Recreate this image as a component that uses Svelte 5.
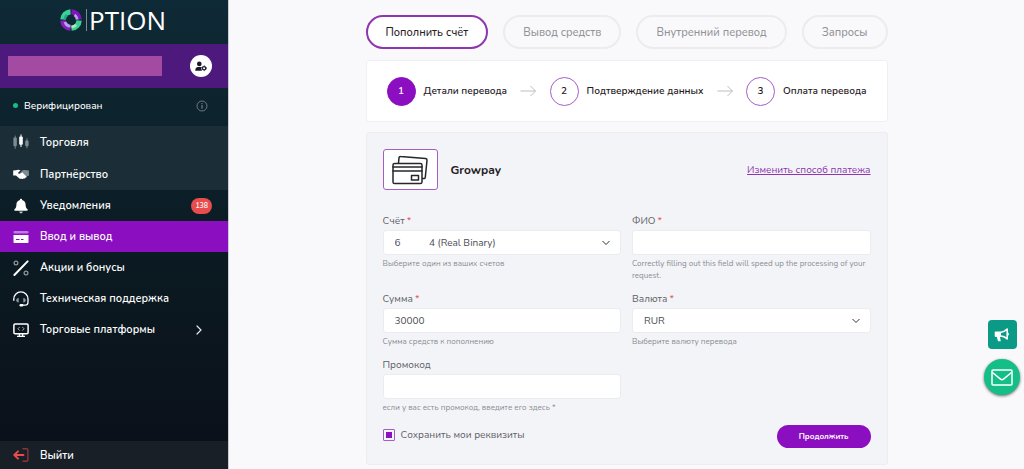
<script>
  const mainNav = [
    { id: 'trade', title: 'Торговля' },
    { id: 'partner', title: 'Партнёрство' }
  ];

  const userNav = [
    { id: 'bell', title: 'Уведомления', badge: 138 },
    { id: 'card', title: 'Ввод и вывод', active: true },
    { id: 'percent', title: 'Акции и бонусы' },
    { id: 'support', title: 'Техническая поддержка' },
    { id: 'platform', title: 'Торговые платформы', arrow: true }
  ];

  const tabs = ['Пополнить счёт', 'Вывод средств', 'Внутренний перевод', 'Запросы'];
  const steps = ['Детали перевода', 'Подтверждение данных', 'Оплата перевода'];
  const account = '6' + '\u00a0'.repeat(11) + '4 (Real Binary)';

  let activeTab = $state(0);
  let fullName = $state('');
  let amount = $state('30000');
  let currency = $state('RUR');
  let promo = $state('');
  let remember = $state(true);
</script>

{#snippet icon(id)}
  <svg class="nav-icon" viewBox="0 0 16 16" aria-hidden="true">
    {#if id === 'trade'}
      <g fill="#7f8c93">
        <rect x="0.4" y="3.6" width="3.4" height="8.6" rx="1" />
        <rect x="1.7" y="1.6" width="0.9" height="13.2" />
        <rect x="12.2" y="6.6" width="3.4" height="5.6" rx="1" />
        <rect x="13.5" y="4.4" width="0.9" height="10" />
      </g>
      <rect x="6.2" y="2.4" width="3.6" height="8.4" rx="1" fill="#fff" />
      <rect x="7.5" y="0.4" width="1" height="12.6" fill="#fff" />
    {:else if id === 'partner'}
      <path d="M9.6 4.2 12 4l3.9.4v5.4l-2.1.5-3.6-3.5-2.2.9-.9-1z" fill="#7f8c93" />
      <path d="M.2 4.6 3 4.2l2-.4 2.6.4-2.3 2.2c-.4.8.6 1.6 1.6 1.2l2.8-1.1 3.8 3.7c.5.9-.4 1.6-1.2 1.2.2.8-.8 1.4-1.5.9-.3.9-1.6 1-2.2.4-1 .3-2-.1-2.8-.8L3 9.6H.2z" fill="#fff" />
    {:else if id === 'bell'}
      <path d="M8 .8c.7 0 1.1.4 1.1 1.1 2.3.6 3.5 2.3 3.5 4.9 0 2.4.7 3.4 1.9 4.5.6.7.2 1.5-.6 1.5H2.1c-.8 0-1.2-.8-.6-1.5 1.2-1.1 1.9-2.1 1.9-4.5 0-2.6 1.2-4.3 3.500-4.900C6.900 1.200 7.300.8 8 .8z" fill="#fff" />
      <path d="M6.200 13.600h3.600c0 2.400-3.600 2.400-3.600 0z" fill="#b7bec2" />
    {:else if id === 'card'}
      <rect x="0.5" y="2" width="15" height="2.6" rx="1" fill="#c07be6" />
      <path d="M.5 6h15v7c0 .6-.4 1-1 1h-13c-.6 0-1-.4-1-1z" fill="#fff" />
      <path d="M3 10.500h3.500M8 10.500h2.500" stroke="#8b0fc0" stroke-width="1" />
    {:else if id === 'percent'}
      <path d="M1.400 15 14.600 1.400" stroke="#fff" stroke-width="2" stroke-linecap="round" />
      <circle cx="3" cy="3" r="1.9" fill="none" stroke="#8d989d" stroke-width="1.2" />
      <circle cx="13" cy="13" r="1.9" fill="none" stroke="#8d989d" stroke-width="1.2" />
    {:else if id === 'support'}
      <path d="M.8 9.300V8A7 7 0 0 1 15 8v3c0 2-1 3.200-3.200 3.200H9" fill="none" stroke="#fff" stroke-width="1.3" stroke-linecap="round" />
      <rect x="6.5" y="13" width="3.8" height="2.4" rx="1.2" fill="#fff" />
      <path d="M5.700 7v4.500c-3.300 0-3.300-4.500 0-4.500zM10.300 7v4.500c3.300 0 3.300-4.500 0-4.500z" fill="#8d989d" />
    {:else if id === 'platform'}
      <rect x="0.9" y="1.9" width="14.2" height="9.8" rx="1.2" fill="none" stroke="#fff" stroke-width="1.5" />
      <path d="M6.400 11.700v2M9.600 11.700v2M4 14.400h8" stroke="#fff" stroke-width="1.4" />
      <path d="m6.700 5-1.800 1.800 1.800 1.800M9.300 5l1.800 1.800-1.800 1.800" fill="none" stroke="#a7b0b4" stroke-width="1" />
    {:else if id === 'exit'}
      <path d="M9.500 1.800h4.200c.7 0 1.200.5 1.200 1.200v10c0 .7-.5 1.200-1.200 1.200H9.500" fill="none" stroke="#8b343a" stroke-width="1.4" />
      <path d="M10.500 8H1.500M5 4.300 1.300 8 5 11.700" fill="none" stroke="#ea4b4b" stroke-width="1.9" stroke-linecap="round" stroke-linejoin="round" />
    {/if}
  </svg>
{/snippet}

{#snippet navItem(item)}
  <a href="#{item.id}" class="nav-item" class:active={item.active}>
    {@render icon(item.id)}
    <span>{item.title}</span>
    {#if item.badge}
      <span class="badge">{item.badge}</span>
    {/if}
    {#if item.arrow}
      <svg class="nav-arrow" viewBox="0 0 8 10" aria-hidden="true">
        <path d="m2 1 4 4-4 4" fill="none" stroke="#e4e8ea" stroke-width="1.2" stroke-linecap="round" />
      </svg>
    {/if}
  </a>
{/snippet}

<div class="layout">
  <aside class="sidebar">
    <a class="logo" href="#home">
      <svg class="logo-ring" viewBox="0 0 22 22" aria-hidden="true">
        <g fill="none" stroke-width="5.4">
          <path d="M10.500 2.900A8.100 8.100 0 0 0 2.900 10.500" stroke="#39d39a" />
          <path d="M2.900 11.500a8.100 8.100 0 0 0 7.600 7.600" stroke="#8a1fc0" />
          <path d="M11.500 19.100a8.100 8.100 0 0 0 7.600-7.600" stroke="#3ccf95" />
          <path d="M19.100 10.500a8.100 8.100 0 0 0-7.600-7.600" stroke="#8314bd" />
        </g>
        <g fill="none" stroke-width="2.8">
          <path d="M5 13a6.300 6.300 0 0 0 5.500 4.200" stroke="#b9a0f2" />
          <path d="M17.200 10.500a6.300 6.300 0 0 0-2.700-4.600" stroke="#b9a0f2" />
          <path d="M11.500 18.200a7.300 7.300 0 0 0 4.500-2.300" stroke="#b6e9b4" />
          <path d="M4.600 10.500a6.500 6.500 0 0 1 2.400-4.500" stroke="#23a983" />
        </g>
      </svg>
      <span class="logo-text">PTION</span>
    </a>

    <div class="profile">
      <span class="profile-name"></span>
      <button type="button" class="profile-btn" aria-label="Профиль">
        <svg viewBox="0 0 14 12" aria-hidden="true">
          <circle cx="5" cy="3" r="2.7" fill="#1b1826" />
          <path d="M.3 11c0-3 1.300-4.400 3.200-4.400h2.800c.6 0 1.100.1 1.500.4-.8 1.400-.6 2.800.6 4z" fill="#1b1826" />
          <circle cx="10.6" cy="8" r="1.9" fill="none" stroke="#1b1826" stroke-width="1.4" />
          <circle cx="10.6" cy="8" r="2.8" fill="none" stroke="#1b1826" stroke-width="0.8" stroke-dasharray="1.4 1.5" />
        </svg>
      </button>
    </div>

    <div class="status">
      <span class="dot"></span>
      <span>Верифицирован</span>
      <svg class="info" viewBox="0 0 12 12" aria-hidden="true">
        <circle cx="6" cy="6" r="5" fill="none" stroke="#72808a" stroke-width="0.9" />
        <path d="M6 5.200v3.400M6 3.200v1" stroke="#8b979f" stroke-width="1" />
      </svg>
    </div>

    <nav>
      <div class="nav-group">
        {#each mainNav as item}
          {@render navItem(item)}
        {/each}
      </div>
      {#each userNav as item}
        {@render navItem(item)}
      {/each}
    </nav>

    <a href="#exit" class="nav-item exit">
      {@render icon('exit')}
      <span>Выйти</span>
    </a>
  </aside>

  <main>
    <div class="content">
      <div class="tabs">
        {#each tabs as tab, index}
          <button type="button" class="tab" class:active={activeTab === index} onclick={() => (activeTab = index)}>{tab}</button>
        {/each}
      </div>

      <div class="steps">
        {#each steps as step, index}
          {#if index > 0}
            <svg class="step-arrow" viewBox="0 0 16 12" aria-hidden="true">
              <path d="M.5 6h15M10.500 1l5 5-5 5" fill="none" stroke="#bdbdc1" stroke-width="1" />
            </svg>
          {/if}
          <div class="step">
            <span class="step-number" class:current={index === 0}>{index + 1}</span>
            <span>{step}</span>
          </div>
        {/each}
      </div>

      <form class="card" onsubmit={(e) => e.preventDefault()}>
        <div class="card-header">
          <span class="pay-logo">
            <svg viewBox="0 0 36 30" aria-hidden="true">
              <g fill="#fff" stroke="#26272b" stroke-width="1.5" stroke-linejoin="round" stroke-linecap="round">
                <path d="M6.500 8 7 2.900C7.100 2 7.700 1.400 8.600 1.500l25 2.100c.9.100 1.500.8 1.400 1.700l-1.700 17c-.1.900-.8 1.400-1.600 1.300L30 23.500" />
                <rect x="1" y="8.5" width="29" height="20" rx="1.6" />
                <path d="M1 12h29M1 16h29" />
                <rect x="19.5" y="20.5" width="7" height="4.5" />
              </g>
            </svg>
          </span>
          <h2>Growpay</h2>
          <a href="#methods" class="change">Изменить способ платежа</a>
        </div>

        <div class="fields">
          <div class="field">
            <label for="account">Счёт<i>*</i></label>
            <select id="account">
              <option>{account}</option>
            </select>
            <p>Выберите один из ваших счетов</p>
          </div>
          <div class="field">
            <label for="name">ФИО<i>*</i></label>
            <input id="name" type="text" bind:value={fullName} />
            <p>Correctly filling out this field will speed up the processing of your request.</p>
          </div>
          <div class="field">
            <label for="amount">Сумма<i>*</i></label>
            <input id="amount" type="text" bind:value={amount} />
            <p>Сумма средств к пополнению</p>
          </div>
          <div class="field">
            <label for="currency">Валюта<i>*</i></label>
            <select id="currency" bind:value={currency}>
              <option>RUR</option>
              <option>USD</option>
            </select>
            <p>Выберите валюту перевода</p>
          </div>
          <div class="field">
            <label for="promo">Промокод</label>
            <input id="promo" type="text" bind:value={promo} />
            <p>если у вас есть промокод, введите его здесь *</p>
          </div>
        </div>

        <div class="card-footer">
          <label class="remember">
            <input type="checkbox" bind:checked={remember} />
            Сохранить мои реквизиты
          </label>
          <button type="submit" class="submit">Продолжить</button>
        </div>
      </form>
    </div>
  </main>

  <div class="floating">
    <button type="button" class="float-news" aria-label="Новости">
      <svg viewBox="0 0 16 16" aria-hidden="true">
        <path d="M1.500 5.200h4.700C9 5.200 11.300 4 13.200 2v10c-1.900-1.900-4.200-3-7-3H1.500z" fill="none" stroke="#fff" stroke-width="1.6" stroke-linejoin="round" />
        <path d="M1 5h6v4.500H1zM2.600 9h3.200l1 5.200H4z" fill="#fff" />
        <path d="M14.200 5.500c1.200.7 1.200 2.500 0 3.200z" fill="#fff" />
      </svg>
    </button>
    <button type="button" class="float-mail" aria-label="Написать">
      <svg viewBox="0 0 22 17" aria-hidden="true">
        <rect x="1" y="1" width="20" height="15" rx="1" fill="none" stroke="#fff" stroke-width="1.5" />
        <path d="m1.500 3.500 8 6.600c1 .8 2 .8 3 0l8-6.600" fill="none" stroke="#fff" stroke-width="1.5" />
      </svg>
    </button>
  </div>
</div>

<style>
  :global(body) {
    margin: 0;
    background: #f9f9fc;
  }

  .layout {
    display: flex;
    min-height: 100vh;
    font-family: Nunito, 'Open Sans', 'Noto Sans', sans-serif;
    font-size: 11px;
    color: #1f2024;
  }

  .layout :is(button, input, select) {
    font-family: inherit;
    box-sizing: border-box;
    margin: 0;
  }

  .layout button {
    cursor: pointer;
  }

  svg {
    display: block;
    flex-shrink: 0;
  }

  /* Sidebar */
  .sidebar {
    position: sticky;
    top: 0;
    flex: 0 0 228px;
    height: 100vh;
    display: flex;
    flex-direction: column;
    background: linear-gradient(180deg, #0e2a36 0%, #0b1a22 55%, #0b0f18 100%);
    border-right: 1px solid #c9ccd3;
    color: #fff;
  }

  .logo {
    height: 44px;
    flex-shrink: 0;
    display: flex;
    align-items: center;
    justify-content: center;
    gap: 4px;
    padding: 0 2px 4px 0;
    box-sizing: border-box;
    color: #fff;
    text-decoration: none;
  }

  .logo-ring {
    width: 22px;
    height: 22px;
  }

  .logo-text {
    border-left: 1px solid #7d8a92;
    padding-left: 2px;
    font-family: 'Open Sans', sans-serif;
    font-size: 26px;
    line-height: 22px;
    font-weight: 500;
  }

  .profile {
    height: 44px;
    flex-shrink: 0;
    display: flex;
    align-items: center;
    justify-content: space-between;
    padding: 0 16px 0 8px;
    background: #4d197c;
  }

  .profile-name {
    width: 154px;
    height: 20px;
    background: #a34ba3;
  }

  .profile-btn {
    width: 22px;
    height: 22px;
    padding: 0;
    display: flex;
    align-items: center;
    justify-content: center;
    border: 0;
    border-radius: 50%;
    background: #fff;
  }

  .profile-btn svg {
    width: 12px;
    height: 11px;
  }

  .status {
    height: 38px;
    flex-shrink: 0;
    display: flex;
    align-items: center;
    gap: 6px;
    padding: 0 20px 3px 13px;
    box-sizing: border-box;
    font-size: 10px;
    font-weight: 500;
  }

  .dot {
    width: 5px;
    height: 5px;
    border-radius: 50%;
    background: #16bf83;
  }

  .info {
    width: 12px;
    height: 12px;
    margin-left: auto;
  }

  .nav-group {
    background: #1b2e38;
  }

  .nav-item {
    height: 31px;
    display: flex;
    align-items: center;
    gap: 11px;
    padding: 0 16px 0 13px;
    color: #fff;
    font-weight: 600;
    text-decoration: none;
  }

  .nav-group .nav-item {
    height: 32px;
  }

  .nav-item.active {
    background: #8b0fc0;
  }

  .nav-icon {
    width: 16px;
    height: 16px;
  }

  .badge {
    margin-left: auto;
    padding: 0 4px;
    border-radius: 8px;
    background: #e84c4c;
    font-size: 7px;
    line-height: 16px;
  }

  .nav-arrow {
    width: 8px;
    height: 10px;
    margin: 0 9px 0 auto;
  }

  .exit {
    height: 28px;
    margin-top: auto;
    background: #181f27;
  }

  /* Content */
  main {
    flex: 1;
    min-width: 0;
    padding: 15px 16px 4px;
  }

  .content {
    max-width: 522px;
    margin: 0 auto;
  }

  .tabs {
    display: flex;
    justify-content: space-between;
    margin-bottom: 11px;
  }

  .tab {
    height: 34px;
    padding: 0 18px;
    border: 2px solid #ececef;
    border-radius: 17px;
    background: #f9f9fc;
    color: #929397;
    font-size: 11px;
    font-weight: 500;
  }

  .tab.active {
    border-color: #8f35b0;
    background: #fff;
    color: #1f2024;
  }

  .steps {
    display: flex;
    align-items: center;
    justify-content: space-between;
    height: 62px;
    padding: 0 20px;
    box-sizing: border-box;
    border: 1px solid #f0f0f3;
    border-radius: 3px;
    background: #fff;
    font-size: 10px;
    font-weight: 600;
  }

  .step {
    display: flex;
    align-items: center;
    gap: 8px;
  }

  .step-number {
    width: 29px;
    height: 29px;
    box-sizing: border-box;
    border: 1px solid #a55fc4;
    border-radius: 50%;
    line-height: 27px;
    text-align: center;
  }

  .step-number.current {
    border-color: #8b0fc0;
    background: #8b0fc0;
    color: #fff;
  }

  .step-arrow {
    width: 16px;
    height: 12px;
  }

  .card {
    margin-top: 10px;
    padding: 16px;
    border: 1px solid #ededf1;
    border-radius: 3px;
    background: #f3f4f8;
  }

  .card-header {
    display: flex;
    align-items: center;
    margin-bottom: 23px;
  }

  .pay-logo {
    width: 55px;
    height: 41px;
    display: flex;
    align-items: center;
    justify-content: center;
    box-sizing: border-box;
    border: 1px solid #a55fc4;
    border-radius: 3px;
    background: #fff;
  }

  .pay-logo svg {
    width: 36px;
    height: 30px;
  }

  h2 {
    margin: 0 0 0 13px;
    font-size: 12px;
    font-weight: 700;
  }

  .change {
    margin-left: auto;
    color: #8f35b0;
    font-size: 10px;
  }

  .fields {
    display: grid;
    grid-template-columns: 1fr 1fr;
    gap: 9px 11px;
  }

  .field label {
    display: block;
    line-height: 17px;
    font-size: 10px;
    color: #606166;
  }

  .field i {
    margin-left: 2px;
    color: #e84c4c;
    font-style: normal;
  }

  .field :is(input, select) {
    display: block;
    width: 100%;
    height: 25px;
    padding: 0 11px;
    border: 1px solid #ececf0;
    border-radius: 3px;
    background-color: #fff;
    color: #4a4b50;
    font-size: 10px;
  }

  .field select {
    appearance: none;
    background-image: url("data:image/svg+xml,%3Csvg xmlns='http://www.w3.org/2000/svg' viewBox='0 0 8 6'%3E%3Cpath d='M.5 1l3.500 3.500L7.500 1' fill='none' stroke='%23333333'/%3E%3C/svg%3E");
    background-repeat: no-repeat;
    background-position: right 10px center;
    background-size: 8px 6px;
  }

  .field p {
    margin: 3px 0 0;
    font-size: 8px;
    line-height: 12px;
    color: #8c8d92;
  }

  .card-footer {
    display: flex;
    align-items: flex-start;
    justify-content: space-between;
    margin-top: 11px;
  }

  .remember {
    display: flex;
    align-items: center;
    gap: 6px;
    color: #606166;
    font-size: 10px;
    line-height: 20px;
  }

  .remember input {
    appearance: none;
    width: 12px;
    height: 12px;
    padding: 2px;
    border: 1px solid #a55fc4;
    border-radius: 1px;
    background: #fff;
  }

  .remember input:checked {
    background: #8b0fc0 content-box;
  }

  .submit {
    height: 23px;
    padding: 0 22px;
    border: 0;
    border-radius: 12px;
    background: #8b0fc0;
    color: #fff;
    font-size: 8px;
    font-weight: 700;
  }

  /* Floating buttons over the page */
  .floating {
    position: fixed;
    right: 4px;
    bottom: 74px;
    display: flex;
    flex-direction: column;
    align-items: center;
    gap: 10px;
  }

  .floating button {
    display: flex;
    align-items: center;
    justify-content: center;
    padding: 0;
    border: 0;
  }

  .float-news {
    width: 29px;
    height: 29px;
    border-radius: 4px;
    background: #0b9a86;
  }

  .float-news svg {
    width: 16px;
    height: 16px;
  }

  .float-mail {
    width: 36px;
    height: 36px;
    border-radius: 50%;
    background: #13bf86;
    box-shadow: 0 1px 3px rgba(0, 0, 0, 0.6);
  }

  .float-mail svg {
    width: 22px;
    height: 17px;
  }
</style>
